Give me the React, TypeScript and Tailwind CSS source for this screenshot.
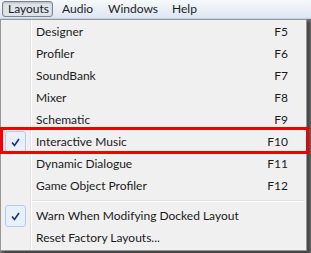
import React from "react";

const items: { label: string; key?: string; checked?: boolean }[] = [
  { label: "Designer", key: "F5" },
  { label: "Profiler", key: "F6" },
  { label: "SoundBank", key: "F7" },
  { label: "Mixer", key: "F8" },
  { label: "Schematic", key: "F9" },
  { label: "Interactive Music", key: "F10", checked: true },
  { label: "Dynamic Dialogue", key: "F11" },
  { label: "Game Object Profiler", key: "F12" },
];

const bottomItems: { label: string; key?: string; checked?: boolean }[] = [
  { label: "Warn When Modifying Docked Layout", checked: true },
  { label: "Reset Factory Layouts..." },
];

function Check() {
  return (
    <div className="w-[21px] h-[22px] ml-[4px] rounded-[3px] border border-[#aeccf0] bg-[#e8f0fa] flex items-center justify-center">
      <svg width="9" height="9" viewBox="0 0 9 9">
        <path d="M1 4.5 L3.5 7.5 L8 1" fill="none" stroke="#1c2a8c" strokeWidth="1.6" />
      </svg>
    </div>
  );
}

function Row({ label, shortcut, checked }: { label: string; shortcut?: string; checked?: boolean }) {
  return (
    <div className="flex items-center h-[22px] pr-[18px]">
      <div className="w-[29px] shrink-0">{checked && <Check />}</div>
      <span className="ml-[6px] flex-1">{label}</span>
      {shortcut && <span className="shrink-0 text-right">{shortcut}</span>}
    </div>
  );
}

export default function App() {
  return (
    <div
      className="relative w-[311px] h-[253px] overflow-hidden bg-[#6d6d6d] text-[12px] text-[#1b1b1b]"
      style={{ fontFamily: 'Lato, "Open Sans", sans-serif' }}
    >
      {/* menu bar */}
      <div className="h-[19px] flex items-center bg-gradient-to-b from-[#f6f9fc] to-[#dde6f2] border-b border-[#c8d2e0]">
        <div className="ml-[2px] w-[51px] h-[16px] pl-[5px] flex items-center rounded-[3px] border border-[#7c8591] bg-[#dfe4ea] shadow-[inset_0_1px_2px_rgba(0,0,0,0.2)]">
          Layouts
        </div>
        <span className="ml-[9px]">Audio</span>
        <span className="ml-[15px]">Windows</span>
        <span className="ml-[14px]">Help</span>
      </div>

      {/* dropdown */}
      <div className="relative w-[307px] h-[232px] bg-[#f0f0f0] border border-[#979797] py-[1px] shadow-[3px_3px_2px_rgba(0,0,0,0.35)]">
        <div className="absolute left-[29px] top-0 bottom-0 w-[2px] border-l border-[#e2e3e3] bg-white" />
        <div className="relative">
          {items.map((it) => (
            <Row key={it.label} label={it.label} shortcut={it.key} checked={it.checked} />
          ))}
          <div className="h-[8px] flex items-center pl-[31px] pr-[2px]">
            <div className="w-full h-[2px] border-t border-[#e0e0e0] bg-white" />
          </div>
          {bottomItems.map((it) => (
            <Row key={it.label} label={it.label} shortcut={it.key} checked={it.checked} />
          ))}
        </div>
      </div>

      {/* highlight annotation */}
      <div className="absolute left-0 top-[127px] w-[309px] h-[27px] border-[3px] border-[#f00000]" />
    </div>
  );
}
